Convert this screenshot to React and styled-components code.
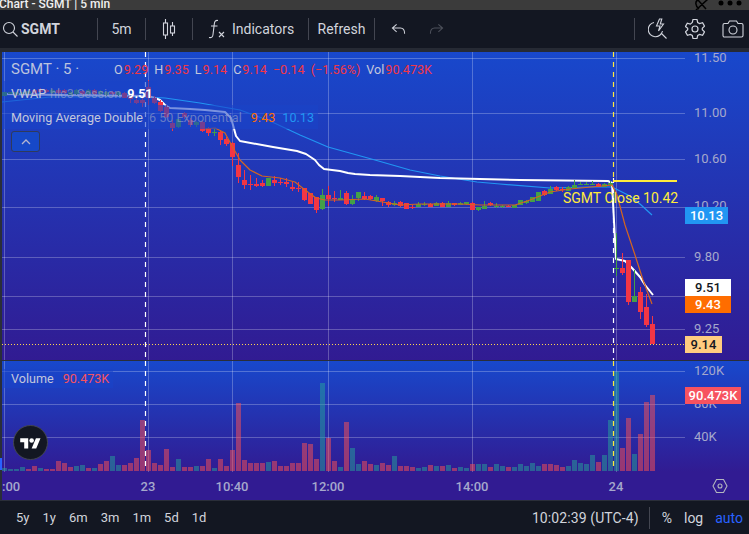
import React from 'react';
import styled, { createGlobalStyle } from 'styled-components';

const GlobalStyle = createGlobalStyle`
  html, body { margin: 0; padding: 0; background: #131722; }
  * { box-sizing: border-box; }
`;

const FONT = 'Roboto, "Noto Sans", "DejaVu Sans", sans-serif';

// all chart coordinates below are screen pixels, the svg viewBoxes take care of the offset
// [x, bodyTop, bodyBottom, wickTop, wickBottom, up]
const candles = [
  [4.5,92,96,92,96,1],[10.5,92,94,92,94,1],[16.5,92,95,92,95,1],[22.5,92,94,92,94,1],[28.5,91,94,91,94,1],
  [34.5,90,93,89,94,0],[40.5,89,92,88,93,0],[46.5,90,92,89,93,0],[52.5,90,93,89,94,1],[58.5,90,93,89,94,0],
  [64.5,90,93,89,94,0],[70.5,92,95,91,95,1],[76.5,90,94,89,95,1],[82.5,91,94,90,95,0],[88.5,90,94,89,95,1],
  [94.5,90,94,89,95,0],[100.5,91,94,90,95,1],[106.5,92,95,91,96,1],[112.5,92,94,91,95,0],[118.5,92,95,91,96,1],
  [124.5,93,98,92,98,0],[130.5,96,99,94,103,0],[136.5,100,103,98,104,0],[142.5,100,103,97,107,0],[148.5,87,98,80,105,0],
  [154.5,98,103,96,104,0],[160.5,102,111,100,112,0],[166.5,107,117,105,118,0],[172.5,123,128,120,131,0],[178.5,119,127,119,128,1],
  [184.5,113,117,112,119,0],[190.5,120,125,118,127,0],[196.5,122,125,121,127,1],[202.5,122,131,121,132,0],[208.5,128,133,127,136,0],
  [214.5,132,133,129,136,1],[220.5,132,140,130,145,0],[226.5,139,144,137,146,0],[232.5,143,157,142,166,0],[238.5,165,177,153,183,0],
  [244.5,180,185,170,189,0],[250.5,184,185,175,190,0],[256.5,184,186,178,187,0],[262.5,183,186,180,187,0],[268.5,178,186,178,186,1],
  [274.5,180,183,176,186,0],[280.5,182,183,178,185,0],[286.5,182,184,178,187,0],[292.5,187,189,182,191,0],[298.5,188,189,182,192,0],
  [304.5,188,200,188,201,0],[310.5,193,204,193,204,0],[316.5,197,210,197,213,0],[322.5,195,209,189,210,1],[328.5,195,199,186,206,0],
  [334.5,198,199,191,202,0],[340.5,198,200,190,200,1],[346.5,193,204,191,205,0],[352.5,199,204,195,205,1],[358.5,192,198,192,201,1],
  [364.5,196,199,192,200,0],[370.5,196,199,195,200,0],[376.5,197,201,195,202,1],[382.5,198,201,198,206,0],[388.5,202,205,201,207,0],
  [394.5,203,205,201,206,1],[400.5,202,206,201,207,0],[406.5,203,209,203,209,0],[412.5,207,208,205,209,0],[418.5,204,207,202,207,1],
  [424.5,204,205,202,206,1],[430.5,204,207,203,207,0],[436.5,203,206,202,206,1],[442.5,203,207,202,207,0],[448.5,203,207,201,207,1],
  [454.5,203,205,203,206,0],[460.5,203,205,202,205,1],[466.5,202,204,202,205,1],[472.5,203,210,202,210,0],[478.5,207,210,207,211,1],
  [484.5,206,209,201,209,1],[490.5,203,205,202,206,0],[496.5,206,207,203,208,1],[502.5,206,207,205,208,1],[508.5,206,207,205,207,0],
  [514.5,205,208,205,208,1],[520.5,200,205,200,205,1],[526.5,201,203,200,204,1],[532.5,197,202,197,202,1],[538.5,192,201,192,201,1],
  [544.5,191,195,190,196,0],[550.5,189,194,186,194,1],[556.5,187,190,186,191,0],[562.5,189,190,187,192,0],[568.5,187,191,186,191,1],
  [574.5,185,188,180,188,1],[580.5,184,185,182,185,1],[586.5,184,185,182,185,1],[592.5,184,185,181,185,1],[598.5,184,187,183,187,0],
  [604.5,184,187,183,187,1],[610.5,183,185,181,187,1],[616.5,268,269,233,276,1],[622.5,268,273,253,275,0],[628.5,260,302,260,305,0],
  [634.5,296,302,270,302,1],[640.5,292,312,287,319,0],[646.5,307,325,294,327,0],[652.5,324,344,316,344,0],
];

// heights at 3x, read off the reference; negative = up bar (teal), positive = down bar (pink)
const volumes = [
  -9,-6,-6,-12,6,15,-9,6,6,30,24,12,-15,-18,9,-9,21,30,-45,-18,18,24,39,153,63,24,18,66,12,-36,12,12,-15,15,36,-9,36,15,63,204,
  33,24,24,24,-27,30,15,15,24,24,84,81,36,-264,99,30,-12,147,-69,-21,30,21,-18,24,18,-45,15,15,12,-9,-12,18,-15,15,-18,9,-12,-9,21,-21,
  -21,12,-21,-15,12,-12,-21,-15,-24,-15,21,21,18,12,-15,-33,-24,-21,-48,27,-48,-153,-298,69,159,-51,111,207,228,
];

const pts = (list) => list.map((p) => p.join(',')).join(' ');

const vwapLine = [[2,94],[60,95],[148,96],[155,98],[160,100],[165,105],[170,108],[190,109],[205,110],[225,112],[231,118],[233,125],[236,136],[240,141],[273,147],[297,151],[306,154],[315,160],[319,165],[324,169],[340,171],[348,173],[355,174],[370,175],[400,176],[440,178],[520,180],[608,181],[612,183],[615,240],[616,259],[625,261],[632,268],[640,277],[645,285],[653,295]];
const slowLine = [[2,102],[50,97],[148,97],[165,98],[200,103],[240,110],[270,121],[300,135],[328,147],[375,160],[410,170],[440,176],[477,182],[500,184],[550,188],[590,187],[612,187],[630,196],[640,204],[652,215]];
const fastLine = [[205,129],[215,128],[225,133],[232,146],[240,160],[250,170],[262,176],[280,178],[295,182],[305,190],[316,198],[325,200],[340,200],[365,199],[400,205],[420,204],[460,204],[480,205],[515,205],[530,200],[550,192],[570,189],[612,185],[617,195],[625,225],[635,255],[643,280],[652,304]];

const timeMarks = [4, 148, 232, 328, 472, 616];

const Page = styled.div`
  width: 749px;
  height: 534px;
  display: flex;
  flex-direction: column;
  overflow: hidden;
  background: #131722;
  font-family: ${FONT};
`;

const TitleBar = styled.div`
  height: 10px;
  flex: none;
  background: #3b3b3b;
  display: flex;
  align-items: flex-end;
  justify-content: space-between;
  overflow: hidden;
  color: #f0f0f0;
  line-height: 13px;
`;

const TitleText = styled.span`
  white-space: nowrap;
  margin-left: -1px;
  margin-bottom: -1px;
  font-size: 12px;
  font-weight: 500;
`;

const Toolbar = styled.div`
  height: 38px;
  flex: none;
  display: flex;
  align-items: center;
  background: #131722;
  color: #d1d4dc;
  font-size: 14px;
`;

const ToolGroup = styled.div`
  height: 100%;
  width: ${(p) => p.$width}px;
  flex: none;
  display: flex;
  align-items: center;
  justify-content: ${(p) => p.$justify || 'center'};
  gap: ${(p) => p.$gap || 0}px;
  padding-left: ${(p) => p.$pad || 0}px;
`;

const Divider = styled.div`
  width: 1px;
  height: 22px;
  flex: none;
  background: #434651;
`;

const Symbol = styled.span`
  font-weight: 700;
  font-size: 14px;
  color: #d1d4dc;
`;

const Redo = styled.span`
  display: flex;
  opacity: 0.3;
  transform: scaleX(-1);
`;

const Gap = styled.div`
  height: 4px;
  flex: none;
  background: #262a34;
`;

const Chart = styled.div`
  position: relative;
  flex: 1;
  display: flex;
  flex-direction: column;
  border-left: 2px solid #2a2e39;
  background: #311b92;
`;

const Pane = styled.div`
  position: relative;
  height: ${(p) => p.$height}px;
  flex: none;
  overflow: hidden;
  background: linear-gradient(180deg, #1848cc 0%, #311b92 100%);
  border-bottom: ${(p) => (p.$ruled ? '1px solid #2a2e39' : 'none')};
`;

const Drawing = styled.svg`
  position: absolute;
  inset: 0;
  display: block;
`;

const Legend = styled.div`
  position: absolute;
  left: 0;
  top: ${(p) => p.$top}px;
  display: flex;
  flex-direction: column;
  align-items: flex-start;
`;

const LegendRow = styled.div`
  height: ${(p) => p.$height || 24}px;
  display: flex;
  align-items: center;
  padding-left: 9px;
  padding-right: 4px;
  white-space: nowrap;
  font-size: 12.6px;
  color: #c3c7dc;
  background: ${(p) => (p.$veil ? 'rgba(26, 68, 200, 0.58)' : 'transparent')};
`;

const SymbolTitle = styled.span`
  font-size: 15px;
  width: 103px;
  color: #bcc3de;
`;

const Ohlc = styled.span`
  margin-right: ${(p) => p.$gap ?? 6}px;
  color: #f23645;
  & > b { font-weight: 400; color: #c3c7dc; margin-right: 1px; }
`;

const Dim = styled.span`
  margin-left: ${(p) => p.$gap ?? 4}px;
  color: rgba(170, 175, 200, 0.55);
`;

const LegendValue = styled.span`
  margin-left: ${(p) => p.$gap ?? 9}px;
  color: ${(p) => p.$color};
  font-weight: ${(p) => p.$weight || 400};
`;

const Collapse = styled.button`
  width: 29px;
  height: 21px;
  margin: 2px 0 0 9px;
  padding: 0;
  display: flex;
  align-items: center;
  justify-content: center;
  background: #1648c8;
  border: 1px solid #2f3a5c;
  border-radius: 3px;
  color: #b2b5d0;
`;

const Tick = styled.span`
  position: absolute;
  left: ${(p) => p.$x}px;
  top: ${(p) => p.$y}px;
  transform: translateY(-50%);
  font-size: 13px;
  line-height: 16px;
  color: #a5a8cc;
  white-space: nowrap;
`;

const Badge = styled.span`
  position: absolute;
  left: 683px;
  top: ${(p) => p.$y}px;
  width: ${(p) => p.$width}px;
  height: 17px;
  display: flex;
  align-items: center;
  justify-content: center;
  font-size: 13px;
  font-weight: 500;
  background: ${(p) => p.$bg};
  color: ${(p) => p.$color};
`;

const CloseNote = styled.span`
  position: absolute;
  left: 561px;
  top: 136px;
  font-size: 14px;
  line-height: 20px;
  color: #ffeb3b;
  white-space: nowrap;
`;

const LogoBadge = styled.div`
  position: absolute;
  left: 11px;
  top: 64px;
  width: 35px;
  height: 35px;
  display: flex;
  align-items: center;
  justify-content: center;
  border-radius: 50%;
  background: #131722;
  border: 1px solid #434651;
`;

const Handle = styled.div`
  position: absolute;
  left: -2px;
  top: 406px;
  width: 2px;
  height: 12px;
  background: #2962ff;
`;

const TimeAxis = styled.div`
  position: relative;
  flex: 1;
  background: #311b92;
`;

const TimeLabel = styled.span`
  position: absolute;
  left: ${(p) => p.$x}px;
  top: 50%;
  transform: translate(${(p) => (p.$flush ? '0' : '-50%')}, -50%);
  font-size: 13px;
  font-weight: 500;
  color: #a5a8cc;
`;

const AxisGear = styled.span`
  position: absolute;
  right: 21px;
  top: 6px;
  display: flex;
  color: #b2b5be;
`;

const BottomBar = styled.div`
  height: 34px;
  flex: none;
  display: flex;
  align-items: center;
  justify-content: space-between;
  border-top: 1px solid #2a2e39;
  background: #131722;
  color: #d1d4dc;
  font-size: 14px;
  padding: 0 6px 0 16px;
`;

const RangeList = styled.div`
  display: flex;
  gap: 13px;
  font-size: 13px;
`;

const RangeItem = styled.span``;

const StatusGroup = styled.div`
  display: flex;
  align-items: center;
  gap: 12px;
`;

const Clock = styled.span`
  letter-spacing: 0.1px;
`;

const BarDivider = styled(Divider)`
  margin-left: -2px;
`;

const AutoLink = styled.span`
  color: #2962ff;
`;

const stroke = { fill: 'none', stroke: 'currentColor', strokeWidth: 1.1 };

const SearchIcon = () => (
  <svg width="16" height="16" viewBox="0 0 16 16" {...stroke}>
    <circle cx="7" cy="7" r="5.5" />
    <path d="M11 11l4.5 4.5" />
  </svg>
);

const CandleIcon = () => (
  <svg width="16" height="22" viewBox="0 0 16 22" {...stroke}>
    <path d="M4.5 1v4M4.5 17v4M11.5 4v4M11.5 15v3" />
    <rect x="2.5" y="5" width="4" height="12" />
    <rect x="9.5" y="8" width="4" height="7" />
  </svg>
);

const FxIcon = () => (
  <svg width="18" height="20" viewBox="0 0 18 20" {...stroke}>
    <path d="M10 1.5C7.5 1 6.5 2.5 6.3 5L5 15.5C4.8 18 3.5 19 1 18.5" />
    <path d="M3 7h6.5M11 13l5 5M16 13l-5 5" />
  </svg>
);

const UndoIcon = () => (
  <svg width="15" height="12" viewBox="0 0 16 12" {...stroke}>
    <path d="M6 1L1.5 5 6 9M1.5 5H10c3 0 4.5 2 4.5 6" />
  </svg>
);

const FlashIcon = () => (
  <svg width="20" height="22" viewBox="0 0 20 22" {...stroke}>
    <path d="M6 4.5A7.2 7.2 0 1 0 14.5 13" />
    <path d="M13 15l5.5 5.500" />
    <path d="M11.5 1L8.5 8h3.5l-1.5 5 5-7h-3.200l1.500-5z" />
  </svg>
);

const GearIcon = () => (
  <svg width="20" height="20" viewBox="2 2 20 20" fill="none" stroke="currentColor" strokeWidth="1.2">
    <path d="M10 2.5h4l.7 3 1.900 1.100 3-.9 1.900 3.400-2.200 2.100v1.600l2.200 2.100-1.900 3.400-3-.9-1.900 1.100-.7 3h-4l-.7-3-1.900-1.100-3 .9-1.900-3.400 2.200-2.100v-1.600L2.400 9.600l1.900-3.400 3 .9L9.300 5.500z" />
    <circle cx="12" cy="12" r="3" />
  </svg>
);

const CameraIcon = () => (
  <svg width="22" height="18" viewBox="0 0 22 18" {...stroke}>
    <path d="M1 5c0-1 .6-1.500 1.500-1.500H6L7.500 1h7L16 3.500h3.500c.9 0 1.500.5 1.500 1.500v10.500c0 1-.6 1.500-1.500 1.500h-17C1.600 17 1 16.500 1 15.500z" />
    <circle cx="11" cy="10" r="4" />
  </svg>
);

const HexIcon = () => (
  <svg width="16" height="16" viewBox="0 0 16 16" {...stroke}>
    <path d="M4.5 1.500h7L15 8l-3.500 6.500h-7L1 8z" />
    <circle cx="8" cy="8" r="2" />
  </svg>
);

const TvLogo = () => (
  <svg width="21" height="12" viewBox="0 2 36 21" fill="#fff">
    <path d="M14 22H7V11H0V4h14v18zM28 22h-8l7.500-18h8L28 22z" />
    <circle cx="20" cy="8" r="4" />
  </svg>
);

const WindowGlyphs = () => (
  <svg width="60" height="10" viewBox="0 0 60 10" fill="#000">
    <path d="M10 9C6 6 6 1 9 0M19 -1L7 10M9 0l8 9" fill="none" stroke="#000" strokeWidth="1.5" />
    <circle cx="32" cy="3" r="2.5" />
    <circle cx="41" cy="3" r="2.5" />
    <circle cx="50" cy="3" r="2.5" />
  </svg>
);

const Grid = ({ rows, top, bottom }) => (
  <g stroke="#fff" strokeOpacity="0.25" strokeWidth="1">
    {rows.map((y) => <line key={y} x1="2" x2="685" y1={y + 0.5} y2={y + 0.5} />)}
    {timeMarks.map((x) => <line key={x} x1={x + 0.5} x2={x + 0.5} y1={top} y2={bottom} />)}
  </g>
);

const Candle = ({ c: [x, top, bot, wTop, wBot, up] }) => {
  const fill = up ? '#43a047' : '#f23645';
  return (
    <g fill={fill}>
      <rect x={x - 0.5} y={wTop} width="1" height={wBot - wTop} />
      <rect x={x - 2.5} y={top} width="5" height={bot - top} />
    </g>
  );
};

const PricePlot = () => (
  <Drawing width="747" height="308" viewBox="2 52 747 308">
    <Grid rows={[58, 113, 159, 207, 257, 296, 329]} top={52} bottom={360} />
    <line x1="145.5" x2="145.5" y1="52" y2="360" stroke="#fff" strokeWidth="1.2" strokeDasharray="5 5" />
    <line x1="613.5" x2="613.5" y1="52" y2="178" stroke="#ffeb3b" strokeWidth="1.2" strokeDasharray="5 5" />
    <line x1="613.5" x2="613.5" y1="178" y2="360" stroke="#fff" strokeWidth="1.2" strokeDasharray="5 5" />
    <polyline points={pts(slowLine)} fill="none" stroke="#2196f3" strokeWidth="1.2" strokeLinejoin="round" />
    <polyline points={pts(vwapLine)} fill="none" stroke="#fff" strokeWidth="2" strokeLinejoin="round" />
    <line x1="613" x2="677" y1="181" y2="181" stroke="#ffeb3b" strokeWidth="2" />
    {candles.map((c) => <Candle key={c[0]} c={c} />)}
    <polyline points={pts(fastLine)} fill="none" stroke="#d4651f" strokeWidth="1.2" strokeLinejoin="round" />
    <line x1="2" x2="685" y1="344.5" y2="344.5" stroke="#ffd54f" strokeWidth="1" strokeDasharray="1 2" />
  </Drawing>
);

const VolumePlot = () => (
  <Drawing width="747" height="111" viewBox="2 361 747 111">
    <Grid rows={[371, 404, 437]} top={361} bottom={472} />
    {volumes.map((v, i) => {
      const h = Math.abs(v) / 3;
      return (
        <rect
          key={i}
          x={2 + 6 * i}
          y={471 - h}
          width="5"
          height={h}
          fill={v < 0 ? '#26a69a' : '#ff5252'}
          fillOpacity="0.5"
        />
      );
    })}
    <line x1="145.5" x2="145.5" y1="361" y2="466" stroke="#fff" strokeWidth="1.2" strokeDasharray="5 5" />
    <line x1="613.5" x2="613.5" y1="361" y2="466" stroke="#ffeb3b" strokeWidth="1.2" strokeDasharray="5 5" />
  </Drawing>
);

const priceTicks = [['11.50', 6], ['11.00', 61], ['10.60', 107], ['10.20', 154], ['9.80', 205], ['9.25', 277]];
const priceBadges = [
  ['10.13', 155, 43, '#2196f3', '#fff'],
  ['9.51', 227, 46, '#fff', '#131722'],
  ['9.43', 244, 46, '#ff6d00', '#fff'],
  ['9.14', 284, 37, '#ffcc80', '#131722'],
];
const ranges = ['5y', '1y', '6m', '3m', '1m', '5d', '1d'];
const times = [['23', 146], ['10:40', 230], ['12:00', 326], ['14:00', 470], ['24', 614]];

const App = () => (
  <Page>
    <GlobalStyle />
    <TitleBar>
      <TitleText>Chart - SGMT | 5 min</TitleText>
      <WindowGlyphs />
    </TitleBar>
    <Toolbar>
      <ToolGroup $width={97} $justify="flex-start" $gap={3} $pad={2}>
        <SearchIcon />
        <Symbol>SGMT</Symbol>
      </ToolGroup>
      <Divider />
      <ToolGroup $width={47}>5m</ToolGroup>
      <Divider />
      <ToolGroup $width={46}><CandleIcon /></ToolGroup>
      <Divider />
      <ToolGroup $width={115} $justify="flex-start" $gap={6} $pad={15}>
        <FxIcon />
        Indicators
      </ToolGroup>
      <Divider />
      <ToolGroup $width={65}>Refresh</ToolGroup>
      <Divider />
      <ToolGroup $width={259} $justify="flex-start" $gap={23} $pad={16}>
        <UndoIcon />
        <Redo><UndoIcon /></Redo>
      </ToolGroup>
      <Divider />
      <ToolGroup $width={114} $justify="flex-start" $gap={17} $pad={13}>
        <FlashIcon />
        <GearIcon />
        <CameraIcon />
      </ToolGroup>
    </Toolbar>
    <Gap />
    <Chart>
      <Pane $height={309} $ruled>
        <PricePlot />
        <Legend $top={5}>
          <LegendRow>
            <SymbolTitle>SGMT · 5 ·</SymbolTitle>
            <Ohlc><b>O</b>9.29</Ohlc>
            <Ohlc><b>H</b>9.35</Ohlc>
            <Ohlc><b>L</b>9.14</Ohlc>
            <Ohlc><b>C</b>9.14</Ohlc>
            <Ohlc>−0.14</Ohlc>
            <Ohlc>(−1.56%)</Ohlc>
            <Ohlc $gap={0}><b>Vol</b>90.473K</Ohlc>
          </LegendRow>
          <LegendRow $veil>
            VWAP
            <Dim>hlc3 Session</Dim>
            <LegendValue $color="#fff" $weight={700} $gap={6}>9.51</LegendValue>
          </LegendRow>
          <LegendRow $veil>
            Moving Average Double
            <Dim $gap={6}>6 50 Exponential</Dim>
            <LegendValue $color="#ff6d00">9.43</LegendValue>
            <LegendValue $color="#2196f3" $gap={7}>10.13</LegendValue>
          </LegendRow>
          <Collapse aria-label="Collapse legend">
            <svg width="10" height="6" viewBox="0 0 10 6" fill="none" stroke="currentColor" strokeWidth="1.3">
              <path d="M1 5l4-4 4 4" />
            </svg>
          </Collapse>
        </Legend>
        <CloseNote>SGMT Close 10.42</CloseNote>
        {priceTicks.map(([label, y]) => <Tick key={label} $x={692} $y={y}>{label}</Tick>)}
        {priceBadges.map(([label, y, w, bg, color]) => (
          <Badge key={label} $y={y} $width={w} $bg={bg} $color={color}>{label}</Badge>
        ))}
      </Pane>
      <Pane $height={111}>
        <VolumePlot />
        <Legend $top={8}>
          <LegendRow $veil $height={19}>
            Volume
            <LegendValue $color="#f7525f" $gap={9}>90.473K</LegendValue>
          </LegendRow>
        </Legend>
        <LogoBadge><TvLogo /></LogoBadge>
        <Tick $x={692} $y={10}>120K</Tick>
        <Tick $x={692} $y={43}>80K</Tick>
        <Tick $x={692} $y={76}>40K</Tick>
        <Badge $y={26} $width={56} $bg="#f7525f" $color="#fff">90.473K</Badge>
      </Pane>
      <TimeAxis>
        <TimeLabel $x={0} $flush>:00</TimeLabel>
        {times.map(([label, x]) => <TimeLabel key={label} $x={x}>{label}</TimeLabel>)}
        <AxisGear><HexIcon /></AxisGear>
      </TimeAxis>
      <Handle />
    </Chart>
    <BottomBar>
      <RangeList>
        {ranges.map((r) => <RangeItem key={r}>{r}</RangeItem>)}
      </RangeList>
      <StatusGroup>
        <Clock>10:02:39 (UTC-4)</Clock>
        <BarDivider />
        <span>%</span>
        <span>log</span>
        <AutoLink>auto</AutoLink>
      </StatusGroup>
    </BottomBar>
  </Page>
);

export default App;
